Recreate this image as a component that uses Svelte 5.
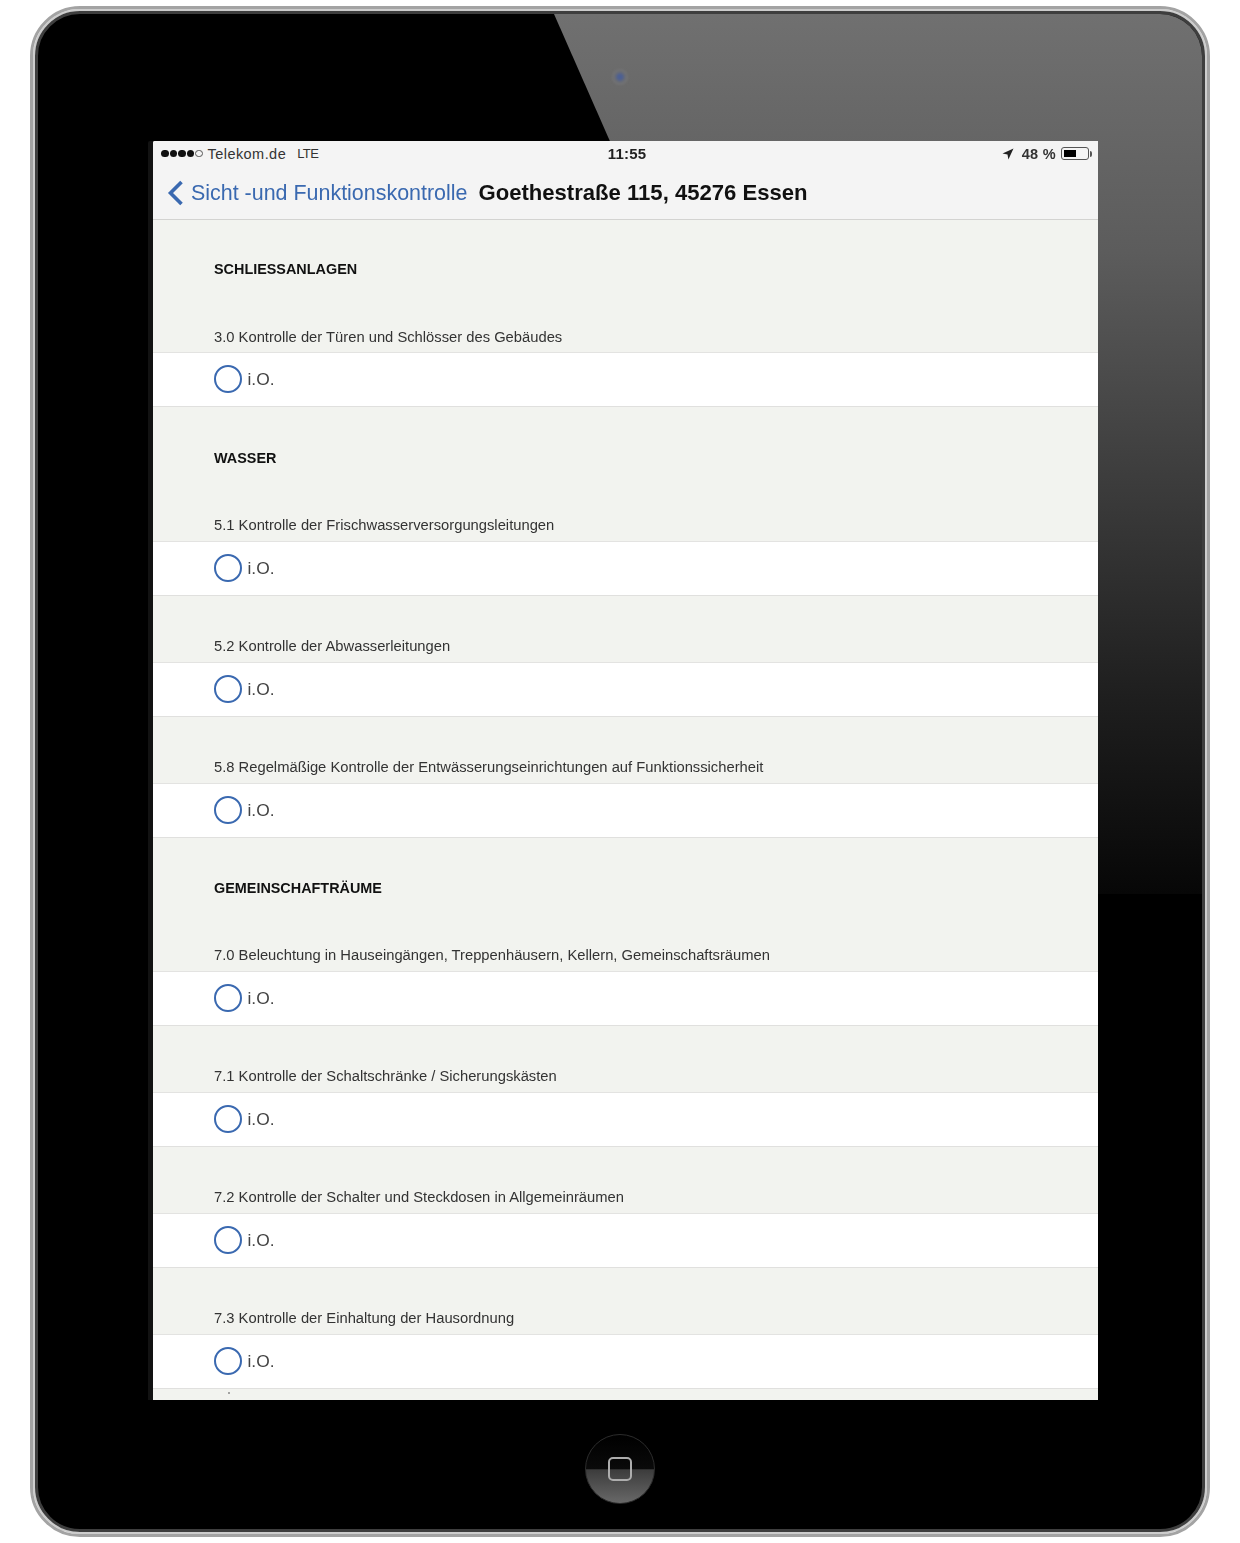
<script>
  const sections = [
    { title: 'SCHLIESSANLAGEN', kind: 'first', items: ['3.0 Kontrolle der Türen und Schlösser des Gebäudes'] },
    { title: 'WASSER', kind: 'mid', items: ['5.1 Kontrolle der Frischwasserversorgungsleitungen', '5.2 Kontrolle der Abwasserleitungen', '5.8 Regelmäßige Kontrolle der Entwässerungseinrichtungen auf Funktionssicherheit'] },
    { title: 'GEMEINSCHAFTRÄUME', kind: 'last', items: ['7.0 Beleuchtung in Hauseingängen, Treppenhäusern, Kellern, Gemeinschaftsräumen', '7.1 Kontrolle der Schaltschränke / Sicherungskästen', '7.2 Kontrolle der Schalter und Steckdosen in Allgemeinräumen', '7.3 Kontrolle der Einhaltung der Hausordnung'] }
  ];
</script>

<div class="device">
  <div class="bezel">
    <div class="glare"></div>
    <div class="camera"></div>
    <main class="screen">
      <div class="status">
        <div class="status-left">
          <span class="dots"><i></i><i></i><i></i><i></i><i class="off"></i></span>
          <span class="carrier">Telekom.de</span>
          <span class="lte">LTE</span>
        </div>
        <div class="time">11:55</div>
        <div class="status-right">
          <svg class="arrow" width="12" height="12" viewBox="0 0 12 12"><path d="M11.5.5 .5 5.6l5 .9.9 5z" fill="#222"/></svg>
          <span class="pct">48 %</span>
          <span class="battery"><span class="level"></span></span>
        </div>
      </div>
      <nav class="nav">
        <svg class="chevron" width="17" height="26" viewBox="0 0 17 26"><path d="M14.5 2 3.5 13l11 11" fill="none" stroke="#3a69b0" stroke-width="3.6"/></svg>
        <span class="back">Sicht -und Funktionskontrolle</span>
        <span class="title">Goethestraße 115, 45276 Essen</span>
      </nav>
      <div class="list">
        {#each sections as s}
          <h2 class={s.kind}>{s.title}</h2>
          {#each s.items as item}
            <div class="question">{item}</div>
            <div class="answer"><span class="radio"></span><span class="label">i.O.</span></div>
          {/each}
        {/each}
        <div class="tail"><span class="speck"></span></div>
      </div>
    </main>
    <div class="home"><span class="home-square"></span></div>
  </div>
</div>

<style>
  :global(body) { margin: 0; background: #fff; }
  .device {
    box-sizing: border-box;
    width: 1180px;
    height: 1531px;
    margin: 6px 0 0 30px;
    padding: 2px;
    border: 3px solid #a3a3a3;
    border-radius: 50px;
    box-shadow: inset 0 0 0 2px #cdcdcd;
  }
  .bezel {
    position: relative;
    box-sizing: border-box;
    height: 100%;
    border: 3px solid #3e3e3e;
    border-radius: 45px;
    background: #000;
    overflow: hidden;
    padding: 127px 0 0 115px;
  }
  .glare {
    position: absolute;
    inset: 0 0 auto 0;
    height: 880px;
    background: linear-gradient(#707070 0, #5c5c5c 27%, #1e1e1e 78%, #070707 100%);
    clip-path: polygon(516px 0, 100% 0, 100% 100%, 903px 100%);
  }
  .camera {
    position: absolute;
    left: 574px;
    top: 55px;
    width: 16px;
    height: 16px;
    border-radius: 50%;
    background: radial-gradient(circle, #4c5f93 0 2.5px, #6a6c72 5px, #767676 8px);
    filter: blur(1px);
  }
  .screen {
    position: relative;
    width: 945px;
    height: 1259px;
    overflow: hidden;
    background: #f2f3ef;
    font-family: "Liberation Sans", Arial, sans-serif;
    color: #333;
    box-shadow: -5px 0 0 #121212;
    border-radius: 2px 0 0 0;
    filter: blur(.3px);
  }
  .status {
    display: grid;
    grid-template-columns: 1fr auto 1fr;
    align-items: center;
    height: 25px;
    padding: 0 7px 0 8px;
    background: #f4f4f4;
    font-size: 14.5px;
  }
  .status-left, .status-right { display: flex; align-items: center; }
  .status-right { justify-content: flex-end; }
  .dots { display: flex; gap: 1px; margin-right: 5px; }
  .dots i { width: 7.5px; height: 7.5px; border-radius: 50%; background: #111; }
  .dots i.off { box-sizing: border-box; background: none; border: 1px solid #555; }
  .carrier { letter-spacing: .45px; margin-right: 11px; }
  .lte { font-size: 13px; letter-spacing: -.6px; }
  .time { font-weight: 700; font-size: 15px; letter-spacing: .2px; transform: translateX(1px); color: #222; }
  .arrow { margin-right: 8px; }
  .pct { font-weight: 700; font-size: 14.5px; letter-spacing: .3px; margin-right: 5px; }
  .battery {
    position: relative;
    box-sizing: border-box;
    display: block;
    width: 28px;
    height: 13px;
    padding: 2px;
    border: 1px solid #555;
    border-radius: 3px;
    margin-right: 2px;
  }
  .battery::after {
    content: "";
    position: absolute;
    right: -4px;
    top: 2.5px;
    width: 2px;
    height: 6px;
    border-radius: 0 2px 2px 0;
    background: #555;
  }
  .level { display: block; width: 12px; height: 100%; background: #000; }
  .nav {
    display: flex;
    align-items: center;
    height: 53px;
    padding-left: 14px;
    background: #f4f4f4;
    border-bottom: 1px solid #d3d3d1;
  }
  .chevron { margin-right: 7px; }
  .back { font-size: 21.45px; color: #3a69b0; margin-right: 11px; padding-top: 2px; }
  .title { font-size: 22.1px; font-weight: 700; color: #111; }
  .list { font-size: 14.75px; }
  h2 {
    box-sizing: border-box;
    margin: 0;
    padding-left: 61px;
    font-size: 14.4px;
    line-height: 18px;
    font-weight: 700;
    color: #111;
  }
  h2.first { height: 66.4px; padding-top: 40px; }
  h2.mid { height: 67.6px; padding-top: 41.6px; }
  h2.last { height: 67px; padding-top: 41px; }
  .question {
    box-sizing: border-box;
    height: 67px;
    padding: 41.2px 0 0 61px;
    line-height: 18px;
    border-bottom: 1px solid #e3e3e1;
  }
  .answer {
    box-sizing: border-box;
    display: flex;
    align-items: center;
    gap: 5.5px;
    height: 54px;
    padding: 0 0 1px 61px;
    background: #fff;
    border-bottom: 1px solid #e0e0de;
    font-size: 17.4px;
    color: #444;
  }
  .label { padding-top: 1px; }
  .radio {
    box-sizing: border-box;
    width: 28px;
    height: 28px;
    border: 2.5px solid #3a69b0;
    border-radius: 50%;
  }
  .tail { position: relative; height: 14px; }
  .speck {
    position: absolute;
    left: 75px;
    top: 3px;
    width: 2px;
    height: 2px;
    border-radius: 50%;
    background: #888;
  }
  .home {
    position: absolute;
    left: 547px;
    top: 1420px;
    box-sizing: border-box;
    display: grid;
    place-items: center;
    width: 70px;
    height: 70px;
    border: 1px solid #2c2c2c;
    border-radius: 50%;
    background: linear-gradient(#000 0, #0a0a0a 50%, #3c3c3c 51%, #686868 100%);
  }
  .home-square {
    box-sizing: border-box;
    width: 24px;
    height: 24px;
    border: 2px solid #adadad;
    border-radius: 5px;
  }
</style>
